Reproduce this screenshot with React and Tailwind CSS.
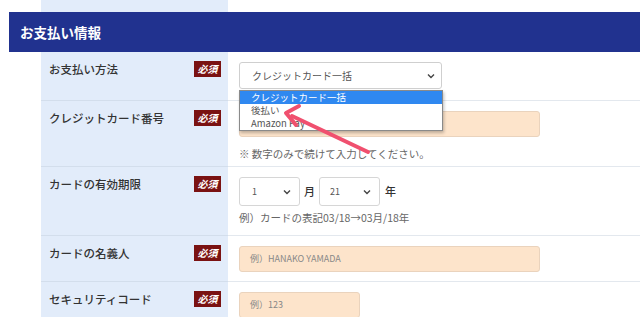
import React from 'react';

const font = { fontFamily: '"Noto Sans CJK JP", "Noto Sans", sans-serif' };

const Badge = () => (
  <span className="flex h-4 w-[27px] items-center justify-center bg-[#7a1212] text-[10px] font-bold italic leading-none text-white">
    必須
  </span>
);

const Chevron = () => (
  <svg width="8" height="6" viewBox="0 0 8 6" className="shrink-0">
    <path d="M1 1.5 L4 4.5 L7 1.5" fill="none" stroke="#444" strokeWidth="1.4" />
  </svg>
);

const Row = ({ label, h, children }) => (
  <div className="flex" style={{ height: h }}>
    <div className="w-[41px] shrink-0 bg-white" />
    <div className="flex w-[187px] shrink-0 items-start justify-between border-b border-[#d3deec] bg-[#e2ecfa] pl-2 pr-[7px] pt-[9px]">
      <span className="text-[11.5px] font-medium leading-4 text-[#333]">{label}</span>
      <Badge />
    </div>
    <div className="relative flex-1 border-b border-[#e3e8ee] pl-[11px] pt-[10px]">{children}</div>
  </div>
);

const App = () => {
  return (
    <div className="relative h-[317px] w-[640px] overflow-hidden bg-white" style={font}>
      {/* top strip */}
      <div className="flex h-3">
        <div className="w-[41px]" />
        <div className="w-[187px] bg-[#e2ecfa]" />
      </div>

      {/* Header */}
      <div className="ml-[9px] flex h-10 items-center bg-[#21328f] pl-[11px]">
        <h2 className="text-[13.5px] font-bold text-white">お支払い情報</h2>
      </div>

      {/* Payment method */}
      <Row label="お支払い方法" h={49}>
        <div className="flex h-[27px] w-[203px] items-center justify-between rounded-[3px] border border-[#cfcfcf] bg-white pl-3 pr-[6px] text-[10px] text-[#555]">
          クレジットカード一括
          <Chevron />
        </div>
        {/* Open dropdown */}
        <div className="absolute left-[11px] top-[38px] z-10 w-[204px] border border-[#8a8a8a] bg-white text-[9.5px] text-[#555] shadow-[1px_2px_3px_rgba(0,0,0,0.25)]">
          <div className="flex h-[13px] items-center overflow-hidden bg-[#2f88f0] pl-[11px] leading-none text-white">クレジットカード一括</div>
          <div className="flex h-[13px] items-center overflow-hidden pl-[11px] leading-none">後払い</div>
          <div className="flex h-[13px] items-center overflow-hidden pl-[11px] leading-none">Amazon Pay</div>
        </div>
      </Row>

      {/* Card number */}
      <Row label="クレジットカード番号" h={66}>
        <div className="h-[26px] w-[301px] rounded-[3px] border border-[#ead3bd] bg-[#fde4cb]" />
        <p className="mt-[9px] text-[10.5px] text-[#666]">※ 数字のみで続けて入力してください。</p>
      </Row>

      {/* Expiry */}
      <Row label="カードの有効期限" h={69}>
        <div className="flex items-center text-[11px] font-medium text-[#333]">
          <div className="flex h-[29px] w-[61px] items-center justify-between rounded-[3px] border border-[#d6d6d6] bg-white pl-3 pr-2 text-[9px] font-normal text-[#555]">
            1
            <Chevron />
          </div>
          <span className="mx-1">月</span>
          <div className="flex h-[29px] w-[61px] items-center justify-between rounded-[3px] border border-[#d6d6d6] bg-white pl-[10px] pr-2 text-[9px] font-normal text-[#555]">
            21
            <Chevron />
          </div>
          <span className="ml-[5px]">年</span>
        </div>
        <p className="mt-[4px] text-[10.5px] text-[#666]">例）カードの表記03/18→03月/18年</p>
      </Row>

      {/* Name */}
      <Row label="カードの名義人" h={46}>
        <div className="flex h-[26px] w-[301px] items-center rounded-[3px] border border-[#ead3bd] bg-[#fde4cb] pl-[10px] text-[9px] text-[#888]">
          例）HANAKO YAMADA
        </div>
      </Row>

      {/* Security code */}
      <Row label="セキュリティコード" h={46}>
        <div className="flex h-[26px] w-[121px] items-center rounded-[3px] border border-[#ead3bd] bg-[#fde4cb] pl-[10px] text-[9px] text-[#888]">
          例）123
        </div>
      </Row>

      {/* Annotation arrow */}
      <svg className="pointer-events-none absolute left-0 top-0 z-20" width="640" height="317">
        <line x1="368" y1="152" x2="292" y2="116" stroke="#f0506f" strokeWidth="4" strokeLinecap="round" />
        <polyline points="299,106 286,113 296,125" fill="none" stroke="#f0506f" strokeWidth="4" strokeLinecap="round" strokeLinejoin="round" />
      </svg>
    </div>
  );
};

export default App;
